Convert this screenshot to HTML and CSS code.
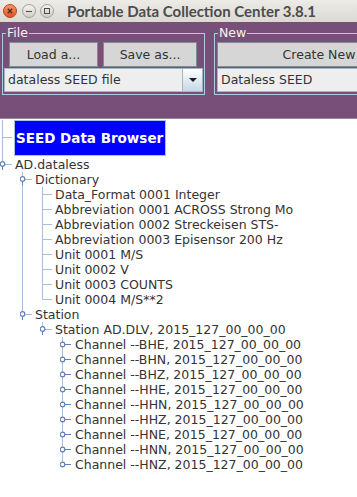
FILE: index.html
```html
<!doctype html>
<html lang="en">
<head>
    <meta charset="UTF-8">
    <title>Portable Data Collection Center 3.8.1</title>
    <link rel="stylesheet" href="styles.css">
</head>
<body>
<svg class="defs" xmlns="http://www.w3.org/2000/svg">
    <symbol id="leaf" viewBox="0 0 15 15">
        <path d="M2 7.5H12" stroke="#a6bfda" stroke-width="1"/>
    </symbol>
    <symbol id="open" viewBox="0 0 15 15">
        <path d="M5 7.5H12" stroke="#a6bfda" stroke-width="1"/>
        <path d="M2.5 9.5V13" stroke="#5f80b6" stroke-width="1"/>
        <circle cx="2.5" cy="7" r="2.3" fill="#fff" stroke="#5f80b6" stroke-width="1.2"/>
    </symbol>
    <symbol id="shut" viewBox="0 0 15 15">
        <path d="M4.5 7.5H11" stroke="#5f80b6" stroke-width="1"/>
        <circle cx="2.5" cy="7.5" r="2.3" fill="#fff" stroke="#5f80b6" stroke-width="1.2"/>
    </symbol>
</svg>

<div class="titlebar">
    <svg class="wbtn close" width="14" height="14" viewBox="0 0 14 14">
        <defs>
            <linearGradient id="og" x1="0" y1="0" x2="0" y2="1">
                <stop offset="0" stop-color="#f89a6c"/>
                <stop offset="1" stop-color="#e0521f"/>
            </linearGradient>
        </defs>
        <circle cx="7" cy="7" r="6.5" fill="url(#og)" stroke="#b9461d"/>
        <path d="M4.8 4.8L9.2 9.2M9.2 4.8L4.8 9.2" stroke="#4a2a1a" stroke-width="1.3"/>
    </svg>
    <svg class="wbtn min" width="14" height="14" viewBox="0 0 14 14">
        <defs>
            <linearGradient id="gg" x1="0" y1="0" x2="0" y2="1">
                <stop offset="0" stop-color="#f6f5f3"/>
                <stop offset="1" stop-color="#cfccc6"/>
            </linearGradient>
        </defs>
        <circle cx="7" cy="7" r="6.5" fill="url(#gg)" stroke="#a29f99"/>
        <path d="M4 7.5H10" stroke="#4c4c4c" stroke-width="1"/>
    </svg>
    <svg class="wbtn max" width="14" height="14" viewBox="0 0 14 14">
        <circle cx="7" cy="7" r="6.5" fill="url(#gg)" stroke="#a29f99"/>
        <rect x="4.5" y="4.5" width="5" height="5" fill="none" stroke="#4c4c4c" stroke-width="1"/>
    </svg>
    <span class="title">Portable Data Collection Center 3.8.1</span>
</div>

<div class="toolbar">
    <fieldset class="group file">
        <legend>File</legend>
        <div class="btns">
            <button class="btn load">Load a...</button>
            <button class="btn save">Save as...</button>
        </div>
        <div class="combo">
            <span class="combo-text">dataless SEED file</span>
            <span class="arrow"></span>
        </div>
    </fieldset>
    <fieldset class="group new">
        <legend>New</legend>
        <div class="btns">
            <button class="btn create">Create New</button>
        </div>
        <div class="combo">
            <span class="combo-text">Dataless SEED</span>
            <span class="arrow"></span>
        </div>
    </fieldset>
</div>

<div class="browser">
    <ul class="tree">
        <li>
            <div class="row root"><svg class="leg"><use href="#leaf"/></svg><span class="rootbox">SEED Data Browser</span></div>
        </li>
        <li>
            <div class="row"><svg class="leg"><use href="#open"/></svg>AD.dataless</div>
            <ul>
                <li>
                    <div class="row"><svg class="leg"><use href="#open"/></svg>Dictionary</div>
                    <ul>
                        <li><div class="row"><svg class="leg"><use href="#leaf"/></svg>Data_Format 0001 Integer</div></li>
                        <li><div class="row"><svg class="leg"><use href="#leaf"/></svg>Abbreviation 0001 ACROSS Strong Mo</div></li>
                        <li><div class="row"><svg class="leg"><use href="#leaf"/></svg>Abbreviation 0002 Streckeisen STS-</div></li>
                        <li><div class="row"><svg class="leg"><use href="#leaf"/></svg>Abbreviation 0003 Episensor 200 Hz</div></li>
                        <li><div class="row"><svg class="leg"><use href="#leaf"/></svg>Unit 0001 M/S</div></li>
                        <li><div class="row"><svg class="leg"><use href="#leaf"/></svg>Unit 0002 V</div></li>
                        <li><div class="row"><svg class="leg"><use href="#leaf"/></svg>Unit 0003 COUNTS</div></li>
                        <li><div class="row"><svg class="leg"><use href="#leaf"/></svg>Unit 0004 M/S**2</div></li>
                    </ul>
                </li>
                <li>
                    <div class="row"><svg class="leg"><use href="#open"/></svg>Station</div>
                    <ul>
                        <li>
                            <div class="row"><svg class="leg"><use href="#open"/></svg>Station AD.DLV, 2015_127_00_00_00</div>
                            <ul>
                                <li><div class="row"><svg class="leg"><use href="#shut"/></svg>Channel --BHE, 2015_127_00_00_00</div></li>
                                <li><div class="row"><svg class="leg"><use href="#shut"/></svg>Channel --BHN, 2015_127_00_00_00</div></li>
                                <li><div class="row"><svg class="leg"><use href="#shut"/></svg>Channel --BHZ, 2015_127_00_00_00</div></li>
                                <li><div class="row"><svg class="leg"><use href="#shut"/></svg>Channel --HHE, 2015_127_00_00_00</div></li>
                                <li><div class="row"><svg class="leg"><use href="#shut"/></svg>Channel --HHN, 2015_127_00_00_00</div></li>
                                <li><div class="row"><svg class="leg"><use href="#shut"/></svg>Channel --HHZ, 2015_127_00_00_00</div></li>
                                <li><div class="row"><svg class="leg"><use href="#shut"/></svg>Channel --HNE, 2015_127_00_00_00</div></li>
                                <li><div class="row"><svg class="leg"><use href="#shut"/></svg>Channel --HNN, 2015_127_00_00_00</div></li>
                                <li><div class="row"><svg class="leg"><use href="#shut"/></svg>Channel --HNZ, 2015_127_00_00_00</div></li>
                            </ul>
                        </li>
                    </ul>
                </li>
            </ul>
        </li>
    </ul>
</div>
</body>
</html>
```

FILE: styles.css
```css
*{margin: 0;padding: 0;box-sizing: border-box}
html,body{width: 357px;height: 497px;overflow: hidden;background: #fff}
body{font-family: "DejaVu Sans", sans-serif;font-size: 12.5px;color: #333}
.defs{position: absolute;width: 0;height: 0}

/* window title */
.titlebar{
    height: 22px;
    display: flex;
    align-items: center;
    background: linear-gradient(#ecebe7, #dcd9d3);
}
.wbtn{flex: none}
.close{margin-left: 3px}
.min{margin-left: 5px}
.max{margin-left: 4px}
.title{
    margin-left: 13px;
    font-family: Lato, "DejaVu Sans", sans-serif;
    font-weight: bold;
    font-size: 15px;
    color: #4c4c4c;
    white-space: nowrap;
}

/* purple toolbar */
.toolbar{
    height: 97px;
    padding: 4px 0 0 2px;
    display: flex;
    align-items: flex-start;
    overflow: hidden;
    background: #774f79;
    border-bottom: 1px solid #8e8e8e;
}
.group{
    flex: none;
    border: 1px solid #aecbe4;
    padding: 0 0 2px 0;
}
.group legend{
    margin-left: 3px;
    padding: 0 1px;
    font-size: 12.5px;
    line-height: 14px;
    color: #f4f4f4;
}
.file{width: 203px}
.new{width: 216px;margin-left: 9px}
.btns{display: flex;margin-top: 2px}
.btn{
    height: 25px;
    border: 1px solid #7e8d98;
    background: #d6d6d6;
    font-family: "DejaVu Sans", sans-serif;
    font-size: 12.5px;
    color: #333;
}
.load{width: 89px;margin-left: 6px}
.save{width: 94px;margin-left: 5px}
.create{width: 204px;margin-left: 2px}
.combo{
    display: flex;
    height: 24px;
    margin: 1px 1px 0 1px;
    border: 1px solid #a6b6c2;
    background: #eeeeee;
}
.new .combo{margin-left: 2px;width: 204px}
.combo-text{flex: 1;padding-left: 3px;line-height: 22px;white-space: nowrap}
.arrow{
    width: 20px;
    display: flex;
    align-items: center;
    justify-content: center;
    border-left: 1px solid #a6b6c2;
    background: linear-gradient(#ffffff, #c6d8e8);
}
.arrow::after{
    content: "";
    border-left: 4px solid transparent;
    border-right: 4px solid transparent;
    border-top: 4px solid #1e1e1e;
}

/* tree */
.browser{padding-top: 1px}
.tree,.tree ul{list-style: none}
.tree ul{margin-left: 20px}
.tree li{position: relative}
.tree li::before{
    content: "";
    position: absolute;
    left: 2px;
    top: 0;
    bottom: 0;
    border-left: 1px solid #a6bfda;
}
.tree li:last-child::before{bottom: auto;height: 8px}
.row{
    position: relative;
    z-index: 1;
    display: flex;
    align-items: center;
    height: 15px;
    line-height: 15px;
    white-space: nowrap;
}
.leg{width: 15px;height: 15px;flex: none}
.row.root{height: 37px;align-items: flex-start}
.rootbox{
    margin-left: -1px;
    width: 152px;
    height: 36px;
    line-height: 34px;
    padding-left: 1px;
    background: #0000ff;
    border: 1px solid #a9c3df;
    color: #fff;
    font-weight: bold;
    font-size: 13.5px;
}
.row.root .leg{margin-top: 10px}
```
